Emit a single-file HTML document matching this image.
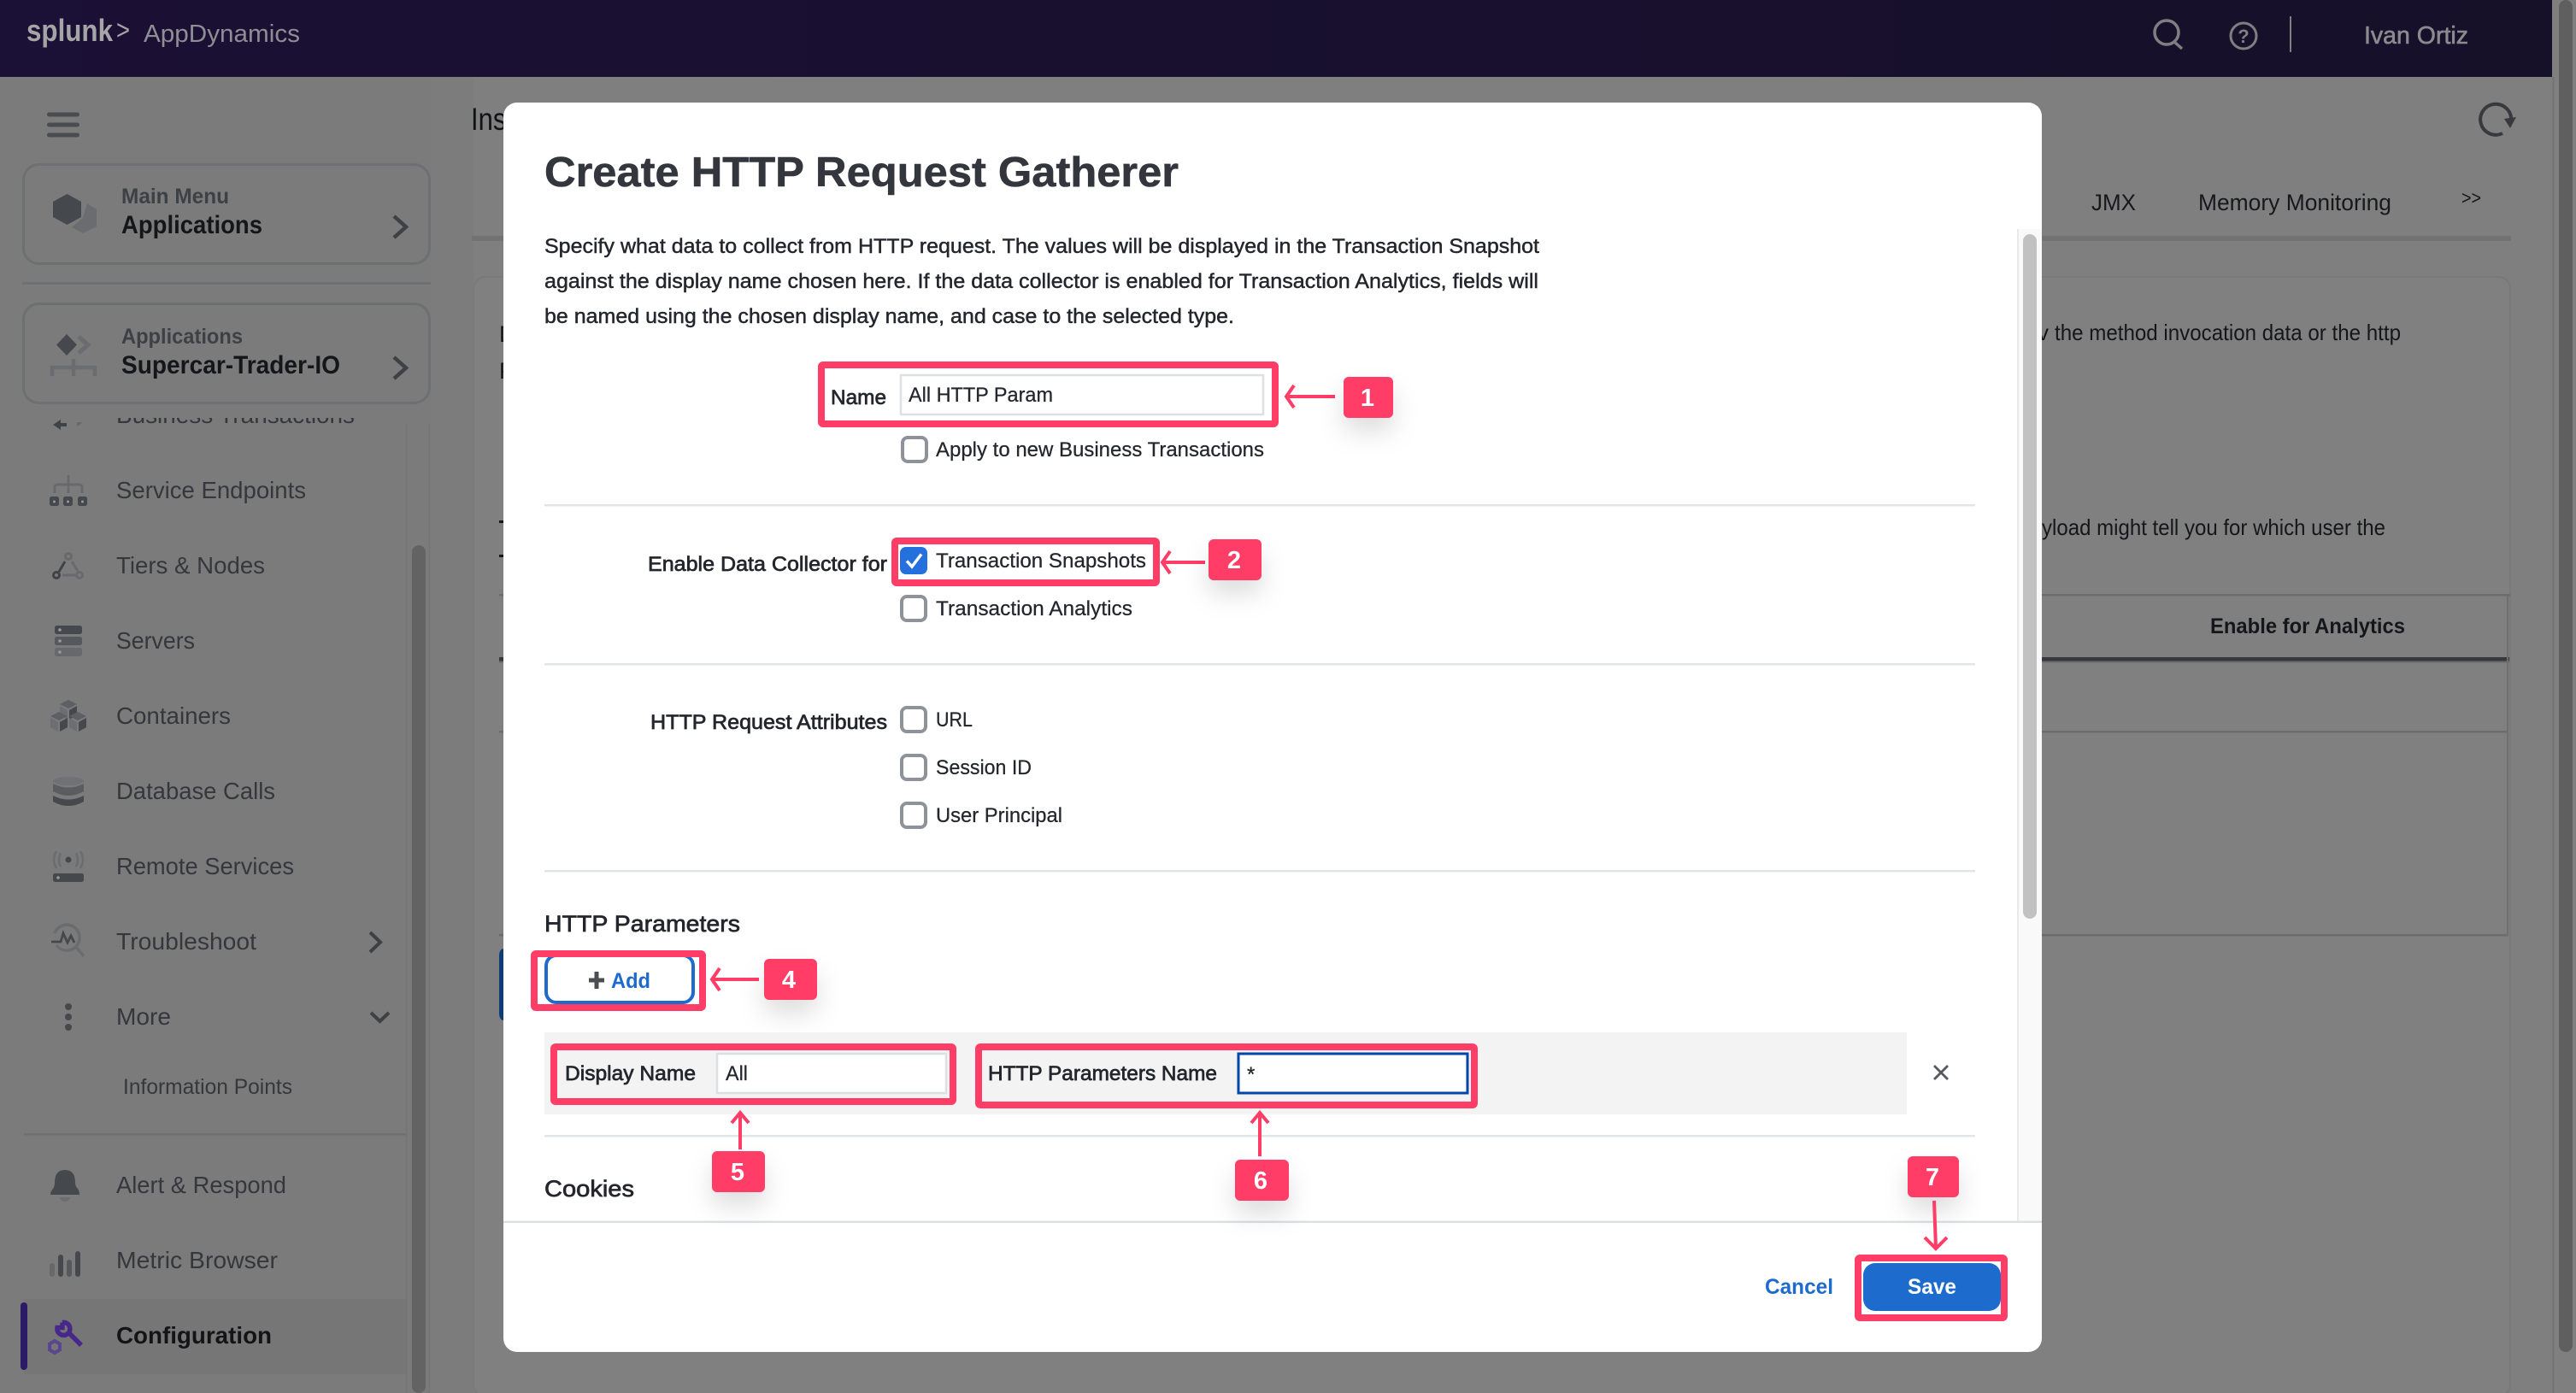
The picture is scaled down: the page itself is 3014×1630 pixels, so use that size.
<!DOCTYPE html>
<html lang="en"><head><meta charset="utf-8"><title>Create HTTP Request Gatherer</title>
<style>
html,body{margin:0;padding:0;width:3014px;height:1630px;overflow:hidden;background:#7f7f7f}
svg{display:block;position:absolute;left:0;top:0}
text{font-family:"Liberation Sans",Arial,sans-serif;white-space:pre}
.d{font-size:24px;fill:#23262c;stroke:#23262c;stroke-width:.45px}
.o{font-size:24px;fill:#23262c;stroke:#23262c;stroke-width:.25px}
.l{font-size:24px;fill:#23262c;stroke:#23262c;stroke-width:.7px}
.h{font-size:27px;fill:#23262c;stroke:#23262c;stroke-width:.7px}
.s{font-size:28px;fill:#35373c}
.m{font-size:25px;fill:#15161a}
.b{font-size:29px;font-weight:700;fill:#fff;text-anchor:middle}
.bd{filter:drop-shadow(0 16px 14px rgba(0,0,0,.13))}
.box{fill:none;stroke:#ff3d67;stroke-width:8}
.arr{fill:none;stroke:#ff3d67;stroke-width:4}
.cb{fill:#fff;stroke:#8d929b;stroke-width:4}
.inp{fill:#fff;stroke:#dcdfe3;stroke-width:2.5}
.dv{fill:#e3e4e8}
</style></head><body>
<svg width="3014" height="1630" viewBox="0 0 3014 1630" xmlns="http://www.w3.org/2000/svg">
<defs>
<clipPath id="sc"><rect x="0" y="489" width="480" height="100"/></clipPath>
<clipPath id="mc"><rect x="589" y="120" width="1800" height="1462" rx="16"/></clipPath>
</defs>
<rect width="3014" height="1630" fill="#7f7f7f"/>

<!-- sidebar -->
<rect x="0" y="90" width="505" height="1540" fill="#7b7b7b"/>
<rect x="505" y="90" width="49" height="1540" fill="#7c7c7c"/>
<rect x="475" y="495" width="1.5" height="1135" fill="#747474"/>
<rect x="501.500" y="495" width="1.5" height="1135" fill="#747474"/>
<rect x="482" y="638" width="16" height="992" rx="8" fill="#636363"/>
<g fill="#4a4c50"><rect x="55" y="131.500" width="38" height="5" rx="2.500"/><rect x="55" y="143.500" width="38" height="5" rx="2.500"/><rect x="55" y="155.500" width="38" height="5" rx="2.500"/></g>

<rect x="27.500" y="192.500" width="475" height="116" rx="18" fill="none" stroke="#6d6f72" stroke-width="3"/>
<polygon points="102,238 113,245 113,265 97,273 84,266 97,255" fill="#6b6c70"/>
<polygon points="78.500,227 95,236 95,254 78.500,263 62,254 62,236" fill="#45484d"/>
<text x="142" y="238" class="m" style="font-weight:700;fill:#3d4045" textLength="126" lengthAdjust="spacingAndGlyphs">Main Menu</text>
<text x="142" y="273" style="font-size:30px;font-weight:700;fill:#15161a" textLength="165" lengthAdjust="spacingAndGlyphs">Applications</text>
<path d="M461 253 L475 265.500 L461 278" fill="none" stroke="#3d4045" stroke-width="4.500"/>
<rect x="26" y="330" width="478" height="3" fill="#6f7072"/>

<rect x="27.500" y="355.500" width="475" height="116" rx="18" fill="none" stroke="#6d6f72" stroke-width="3"/>
<polygon points="78,391 90,403.500 78,416 66,403.500" fill="#45484d"/>
<path d="M92 394 L103 403.500 L92 413" fill="none" stroke="#6b6c70" stroke-width="5"/>
<path d="M61 440 V430 H111 V440 M86 420 V440" fill="none" stroke="#6b6c70" stroke-width="4.500"/>
<text x="142" y="402" class="m" style="font-weight:700;fill:#3d4045" textLength="142" lengthAdjust="spacingAndGlyphs">Applications</text>
<text x="142" y="437" style="font-size:30px;font-weight:700;fill:#15161a" textLength="256" lengthAdjust="spacingAndGlyphs">Supercar-Trader-IO</text>
<path d="M461 418 L475 430.500 L461 443" fill="none" stroke="#3d4045" stroke-width="4.500"/>

<g clip-path="url(#sc)"><text x="136" y="495" class="s" textLength="279" lengthAdjust="spacingAndGlyphs">Business Transactions</text></g>
<path d="M62 497 L71 491 V495 H78 V499 H71 V503 Z" fill="#3f4247"/><path d="M90 494 L97 494 L90 499 Z" fill="#66686b"/>

<text x="136" y="583" class="s" textLength="222" lengthAdjust="spacingAndGlyphs">Service Endpoints</text>
<text x="136" y="671" class="s" textLength="174" lengthAdjust="spacingAndGlyphs">Tiers &amp; Nodes</text>
<text x="136" y="759" class="s" textLength="92" lengthAdjust="spacingAndGlyphs">Servers</text>
<text x="136" y="847" class="s" textLength="134" lengthAdjust="spacingAndGlyphs">Containers</text>
<text x="136" y="935" class="s" textLength="186" lengthAdjust="spacingAndGlyphs">Database Calls</text>
<text x="136" y="1023" class="s" textLength="208" lengthAdjust="spacingAndGlyphs">Remote Services</text>
<text x="136" y="1111" class="s" textLength="164" lengthAdjust="spacingAndGlyphs">Troubleshoot</text>
<text x="136" y="1199" class="s" textLength="64" lengthAdjust="spacingAndGlyphs">More</text>
<text x="144" y="1280" style="font-size:25px;fill:#35373c" textLength="198" lengthAdjust="spacingAndGlyphs">Information Points</text>
<text x="136" y="1396" class="s" textLength="199" lengthAdjust="spacingAndGlyphs">Alert &amp; Respond</text>
<text x="136" y="1484" class="s" textLength="189" lengthAdjust="spacingAndGlyphs">Metric Browser</text>
<rect x="28" y="1326" width="447" height="2.500" fill="#6f7072"/>
<rect x="28" y="1520" width="447" height="88" fill="#767676"/>
<rect x="24" y="1524" width="8" height="79" rx="4" fill="#2b1a66"/>
<text x="136" y="1572" style="font-size:28px;font-weight:700;fill:#141417" textLength="182" lengthAdjust="spacingAndGlyphs">Configuration</text>

<!-- sidebar icons -->
<path d="M80 556 V577 M64 577 V571 Q64 567 68 567 H92 Q96 567 96 571 V577" fill="none" stroke="#68696c" stroke-width="3"/>
<g fill="#45484d"><rect x="58" y="581" width="11" height="11" rx="2.500"/><rect x="74" y="581" width="11" height="11" rx="2.500"/><rect x="91" y="581" width="11" height="11" rx="2.500"/></g>
<g fill="#9a9a9a"><circle cx="63.500" cy="587" r="1.500"/><circle cx="79.500" cy="587" r="1.500"/><circle cx="96.500" cy="587" r="1.500"/></g>

<circle cx="80" cy="651" r="3.500" fill="none" stroke="#68696c" stroke-width="3"/>
<circle cx="66" cy="673" r="3.500" fill="none" stroke="#3f4247" stroke-width="3"/>
<circle cx="93" cy="673" r="3.500" fill="none" stroke="#68696c" stroke-width="3"/>
<path d="M69 669 L76 657" stroke="#3f4247" stroke-width="3" fill="none"/>
<path d="M84 657 L91 668 M73 673 H88" stroke="#68696c" stroke-width="3" fill="none"/>

<rect x="64" y="732" width="32" height="10" rx="2.500" fill="#45484d"/>
<rect x="64" y="745" width="32" height="10" rx="2.500" fill="#55585c"/>
<rect x="64" y="758" width="32" height="10" rx="2.500" fill="#66686b"/>
<g fill="#999"><circle cx="70" cy="737" r="1.800"/><circle cx="70" cy="750" r="1.800"/><circle cx="70" cy="763" r="1.800"/></g>

<g id="cubes">
<polygon points="80,819 90,824 80,829 70,824" fill="#5d5f63"/><polygon points="70,826 79,831 79,842 70,837" fill="#6d6e72"/><polygon points="90,826 81,831 81,842 90,837" fill="#45484d"/>
<polygon points="69,833 79,838 69,843 59,838" fill="#5d5f63"/><polygon points="59,840 68,845 68,856 59,851" fill="#6d6e72"/><polygon points="79,840 70,845 70,856 79,851" fill="#45484d"/>
<polygon points="91,833 101,838 91,843 81,838" fill="#5d5f63"/><polygon points="81,840 90,845 90,856 81,851" fill="#6d6e72"/><polygon points="101,840 92,845 92,856 101,851" fill="#45484d"/>
</g>

<ellipse cx="80" cy="914" rx="18" ry="5" fill="#6f7175"/>
<path d="M62 917 Q80 926 98 917 V926 Q80 936 62 926 Z" fill="#5a5c60"/>
<path d="M62 931 Q80 940 98 931 V938 Q80 948 62 938 Z" fill="#45484d"/>

<circle cx="80" cy="1006" r="3.500" fill="#45484d"/>
<path d="M71 998 Q67 1006 71 1014 M66 996 Q60 1006 66 1016 M89 998 Q93 1006 89 1014 M94 996 Q100 1006 94 1016" fill="none" stroke="#6a6c70" stroke-width="2.500"/>
<rect x="62" y="1022" width="36" height="10" rx="2.500" fill="#45484d"/><circle cx="68" cy="1027" r="1.800" fill="#999"/>

<path d="M64 1092 A15 15 0 1 1 66 1106" fill="none" stroke="#6a6c70" stroke-width="3.500"/>
<path d="M89 1108 L98 1119" fill="none" stroke="#6a6c70" stroke-width="3.500"/>
<path d="M60 1102 H71 L74 1092 L79 1103 L83 1095 L87 1103" fill="none" stroke="#45484d" stroke-width="2.800"/>
<path d="M433 1091 L445 1102.500 L433 1114" fill="none" stroke="#3d4045" stroke-width="4"/>

<circle cx="80" cy="1178" r="4" fill="#45484d"/><circle cx="80" cy="1190" r="4" fill="#45484d"/><circle cx="80" cy="1202" r="4" fill="#45484d"/>
<path d="M434 1185 L444.500 1195 L455 1185" fill="none" stroke="#3d4045" stroke-width="4"/>

<path d="M59 1398 Q59 1394 62 1391 Q64 1388 64 1384 Q64 1369 76 1369 Q88 1369 88 1384 Q88 1388 91 1391 Q93 1394 93 1398 Z" fill="#45484d"/>
<path d="M70 1401 H82 Q81 1406 76 1406 Q71 1406 70 1401 Z" fill="#6d6e72"/>

<rect x="58" y="1478" width="6" height="16" rx="3" fill="#66686b"/>
<rect x="68" y="1468" width="6" height="26" rx="3" fill="#45484d"/>
<rect x="78" y="1474" width="6" height="20" rx="3" fill="#55585c"/>
<rect x="88" y="1464" width="6" height="30" rx="3" fill="#45484d"/>

<path d="M73 1547.500 A7.500 7.500 0 1 1 67 1553.500 L73 1553.500 L73 1547.500" fill="none" stroke="#47288a" stroke-width="5.500"/>
<path d="M79 1558 L95 1574" fill="none" stroke="#47288a" stroke-width="5.500"/>
<polygon points="64,1569 70,1572.500 70,1579.500 64,1583 58,1579.500 58,1572.500" fill="none" stroke="#5c4590" stroke-width="4"/>

<!-- main bg behind modal -->
<text x="551" y="152" style="font-size:37px;fill:#121317" textLength="50" lengthAdjust="spacingAndGlyphs">Inst</text>
<rect x="552" y="276" width="2386" height="6" fill="#727273"/>
<text x="2447" y="246" style="font-size:27px;fill:#17181c" textLength="52" lengthAdjust="spacingAndGlyphs">JMX</text>
<text x="2572" y="246" style="font-size:27px;fill:#17181c" textLength="226" lengthAdjust="spacingAndGlyphs">Memory Monitoring</text>
<text x="2880" y="239" style="font-size:22px;fill:#17181c" textLength="23" lengthAdjust="spacingAndGlyphs">&gt;&gt;</text>
<path d="M2928 156 A18 18 0 1 1 2938 142" fill="none" stroke="#38393d" stroke-width="4"/>
<polygon points="2930,139 2944,137 2937,150" fill="#38393d"/>
<rect x="554" y="324" width="2383" height="1310" rx="14" fill="#808080" stroke="#797979" stroke-width="2"/>
<text x="584" y="400" style="font-size:27px;fill:#15161a">D</text>
<text x="584" y="443" style="font-size:27px;fill:#15161a">P</text>
<rect x="584" y="609" width="10" height="3" fill="#15161a"/>
<rect x="584" y="649" width="10" height="3" fill="#15161a"/>
<text x="2384" y="398" style="font-size:26px;fill:#15161a">v</text>
<text x="2404" y="398" style="font-size:26px;fill:#15161a" textLength="405" lengthAdjust="spacingAndGlyphs">the method invocation data or the http</text>
<text x="2389" y="626" style="font-size:26px;fill:#15161a" textLength="402" lengthAdjust="spacingAndGlyphs">yload might tell you for which user the</text>
<rect x="584" y="695" width="2353" height="2.500" fill="#6c6c6d"/>
<rect x="584" y="769" width="2352" height="4.500" fill="#38393c"/>
<rect x="584" y="773.500" width="2352" height="2" fill="#6c6c6d"/>
<rect x="584" y="855" width="2351" height="2.500" fill="#6c6c6d"/>
<rect x="584" y="1093" width="2351" height="2.500" fill="#6c6c6d"/>
<rect x="2933" y="697" width="2" height="398" fill="#6f6f71"/>
<text x="2586" y="741" class="m" style="font-weight:700" textLength="228" lengthAdjust="spacingAndGlyphs">Enable for Analytics</text>
<rect x="584" y="1110" width="10" height="84" rx="8" fill="#0e3c7a"/>

<!-- right scroll -->
<rect x="2986.500" y="90" width="2" height="1540" fill="#737373"/>
<rect x="2994" y="0" width="16" height="1582" rx="8" fill="#5f5f5f"/>

<!-- header -->
<defs><linearGradient id="hg" x1="0" x2="1" y1="0" y2="0"><stop offset="0" stop-color="#1b1035"/><stop offset="1" stop-color="#161029"/></linearGradient></defs>
<rect x="0" y="0" width="2986" height="90" fill="url(#hg)"/>
<rect x="2986" y="0" width="8" height="90" fill="#7f7f7f"/>
<text x="31" y="48" style="font-size:36px;font-weight:700;fill:#a5a5a6" textLength="101" lengthAdjust="spacingAndGlyphs">splunk</text>
<text x="136" y="46" style="font-size:32px;fill:#a5a5a6" textLength="16" lengthAdjust="spacingAndGlyphs">&gt;</text>
<text x="168" y="49" style="font-size:29px;fill:#8f8e95" textLength="183" lengthAdjust="spacingAndGlyphs">AppDynamics</text>
<circle cx="2535" cy="38" r="14" fill="none" stroke="#7f7f82" stroke-width="3.500"/>
<path d="M2544 49 L2553 57" stroke="#7f7f82" stroke-width="3.500" fill="none"/>
<circle cx="2625" cy="42" r="15" fill="none" stroke="#7f7f82" stroke-width="3"/>
<text x="2625" y="50" style="font-size:22px;font-weight:700;fill:#7f7f82;text-anchor:middle">?</text>
<rect x="2679" y="19" width="2" height="42" fill="#7f7f82"/>
<text x="2766" y="51" style="font-size:29px;font-weight:400;fill:#8b8b8e;stroke:#8b8b8e;stroke-width:.6px" textLength="122" lengthAdjust="spacingAndGlyphs">Ivan Ortiz</text>

<!-- modal -->
<rect x="589" y="120" width="1800" height="1462" rx="16" fill="#fff"/>
<g clip-path="url(#mc)">
<rect x="2360" y="268" width="29" height="1162" fill="#f9f9f9"/>
<rect x="2360" y="268" width="2" height="1162" fill="#e9e9ea"/>
<rect x="2367" y="274" width="16" height="801" rx="8" fill="#c1c1c1"/>
<rect x="589" y="1428.500" width="1800" height="2.500" fill="#dcdfe3"/>
</g>

<text x="637" y="218" style="font-size:49px;font-weight:700;fill:#33373d;stroke:#33373d;stroke-width:.6px" textLength="742" lengthAdjust="spacingAndGlyphs">Create HTTP Request Gatherer</text>
<text x="637" y="296" class="d" textLength="1164" lengthAdjust="spacingAndGlyphs">Specify what data to collect from HTTP request. The values will be displayed in the Transaction Snapshot</text>
<text x="637" y="337" class="d" textLength="1163" lengthAdjust="spacingAndGlyphs">against the display name chosen here. If the data collector is enabled for Transaction Analytics, fields will</text>
<text x="637" y="378" class="d" textLength="807" lengthAdjust="spacingAndGlyphs">be named using the chosen display name, and case to the selected type.</text>

<rect x="961" y="427" width="531" height="69" rx="2" class="box"/>
<rect x="1054" y="439" width="424" height="46" class="inp"/>
<text x="972" y="473" class="l" textLength="65" lengthAdjust="spacingAndGlyphs">Name</text>
<text x="1063" y="470" class="o" textLength="169" lengthAdjust="spacingAndGlyphs">All HTTP Param</text>
<rect x="1056" y="512" width="28" height="28" rx="6" class="cb"/>
<text x="1095" y="534" class="o" textLength="384" lengthAdjust="spacingAndGlyphs">Apply to new Business Transactions</text>
<path d="M1562 464 H1506 M1514 451 L1505 464 L1514 477" class="arr"/>
<rect x="1572" y="441" width="58" height="48" rx="6" fill="#ff3d67" class="bd"/>
<text x="1600" y="475" class="b">1</text>

<rect x="637" y="590" width="1674" height="2.500" class="dv"/>

<text x="758" y="668" class="l" textLength="280" lengthAdjust="spacingAndGlyphs">Enable Data Collector for</text>
<rect x="1047" y="633" width="306" height="49" rx="2" class="box"/>
<rect x="1053" y="640" width="32" height="32" rx="7" fill="#2470dc"/>
<path d="M1061 656.500 L1067 663 L1078 648.500" fill="none" stroke="#fff" stroke-width="3.500"/>
<text x="1095" y="664" class="o" textLength="246" lengthAdjust="spacingAndGlyphs">Transaction Snapshots</text>
<path d="M1410 658 H1361 M1369 645 L1360 658 L1369 671" class="arr"/>
<rect x="1414" y="631" width="62" height="48" rx="6" fill="#ff3d67" class="bd"/>
<text x="1444" y="665" class="b">2</text>
<rect x="1055" y="698" width="28" height="28" rx="6" class="cb"/>
<text x="1095" y="720" class="o" textLength="230" lengthAdjust="spacingAndGlyphs">Transaction Analytics</text>

<rect x="637" y="776" width="1674" height="2.500" class="dv"/>

<text x="761" y="853" class="l" textLength="277" lengthAdjust="spacingAndGlyphs">HTTP Request Attributes</text>
<rect x="1055" y="828" width="28" height="28" rx="6" class="cb"/>
<text x="1095" y="850" class="o" textLength="43" lengthAdjust="spacingAndGlyphs">URL</text>
<rect x="1055" y="884" width="28" height="28" rx="6" class="cb"/>
<text x="1095" y="906" class="o" textLength="112" lengthAdjust="spacingAndGlyphs">Session ID</text>
<rect x="1055" y="940" width="28" height="28" rx="6" class="cb"/>
<text x="1095" y="962" class="o" textLength="148" lengthAdjust="spacingAndGlyphs">User Principal</text>

<rect x="637" y="1018" width="1674" height="2.500" class="dv"/>

<text x="637" y="1090" class="h" textLength="229" lengthAdjust="spacingAndGlyphs">HTTP Parameters</text>
<rect x="639" y="1118" width="172" height="55" rx="12" fill="#fff" stroke="#1d6bcc" stroke-width="4"/>
<rect x="625" y="1116" width="197" height="63" rx="2" class="box"/>
<path d="M698 1137 V1157 M689 1147 H707" stroke="#4a4d52" stroke-width="5" fill="none"/>
<text x="715" y="1156" style="font-size:25px;font-weight:700;fill:#1d6bcc" textLength="46" lengthAdjust="spacingAndGlyphs">Add</text>
<path d="M888 1146 H834 M842 1133 L833 1146 L842 1159" class="arr"/>
<rect x="894" y="1122" width="62" height="48" rx="6" fill="#ff3d67" class="bd"/>
<text x="923" y="1156" class="b">4</text>

<rect x="637" y="1208" width="1594" height="96" fill="#f3f3f3"/>
<rect x="648" y="1225" width="467" height="64" rx="2" class="box"/>
<text x="661" y="1264" class="l" textLength="153" lengthAdjust="spacingAndGlyphs">Display Name</text>
<rect x="839" y="1233" width="268" height="46" class="inp"/>
<text x="849" y="1264" class="o" textLength="26" lengthAdjust="spacingAndGlyphs">All</text>
<rect x="1145" y="1225" width="580" height="68" rx="2" class="box"/>
<text x="1156" y="1264" class="l" textLength="268" lengthAdjust="spacingAndGlyphs">HTTP Parameters Name</text>
<rect x="1449" y="1233" width="268" height="46" fill="#fff" stroke="#0046ad" stroke-width="3"/>
<text x="1459" y="1265" style="font-size:24px;fill:#23262c;stroke:#23262c;stroke-width:.3px">*</text>
<path d="M2263 1247 L2279 1263 M2279 1247 L2263 1263" stroke="#55585d" stroke-width="2.800" fill="none"/>

<rect x="637" y="1328" width="1674" height="2.500" class="dv"/>
<text x="637" y="1400" class="h" textLength="105" lengthAdjust="spacingAndGlyphs">Cookies</text>

<path d="M866 1345 V1304 M856 1314 L866 1302 L876 1314" class="arr"/>
<rect x="833" y="1347" width="62" height="48" rx="6" fill="#ff3d67" class="bd"/>
<text x="863" y="1381" class="b">5</text>
<path d="M1474 1353 V1303 M1464 1314 L1474 1302 L1484 1314" class="arr"/>
<rect x="1445" y="1357" width="63" height="48" rx="6" fill="#ff3d67" class="bd"/>
<text x="1475" y="1391" class="b">6</text>

<rect x="2232" y="1353" width="60" height="48" rx="6" fill="#ff3d67" class="bd"/>
<text x="2261" y="1387" class="b">7</text>
<path d="M2263 1405 L2265 1460 M2252 1448 L2265 1461 L2278 1448" class="arr"/>

<text x="2065" y="1514" style="font-size:25px;font-weight:700;fill:#1d6bcc" textLength="80" lengthAdjust="spacingAndGlyphs">Cancel</text>
<rect x="2180" y="1478" width="161" height="56" rx="14" fill="#1d6bcc"/>
<text x="2232" y="1514" style="font-size:25px;font-weight:700;fill:#fff" textLength="57" lengthAdjust="spacingAndGlyphs">Save</text>
<rect x="2174" y="1472" width="171" height="70" rx="2" class="box"/>
</svg>
</body></html>
